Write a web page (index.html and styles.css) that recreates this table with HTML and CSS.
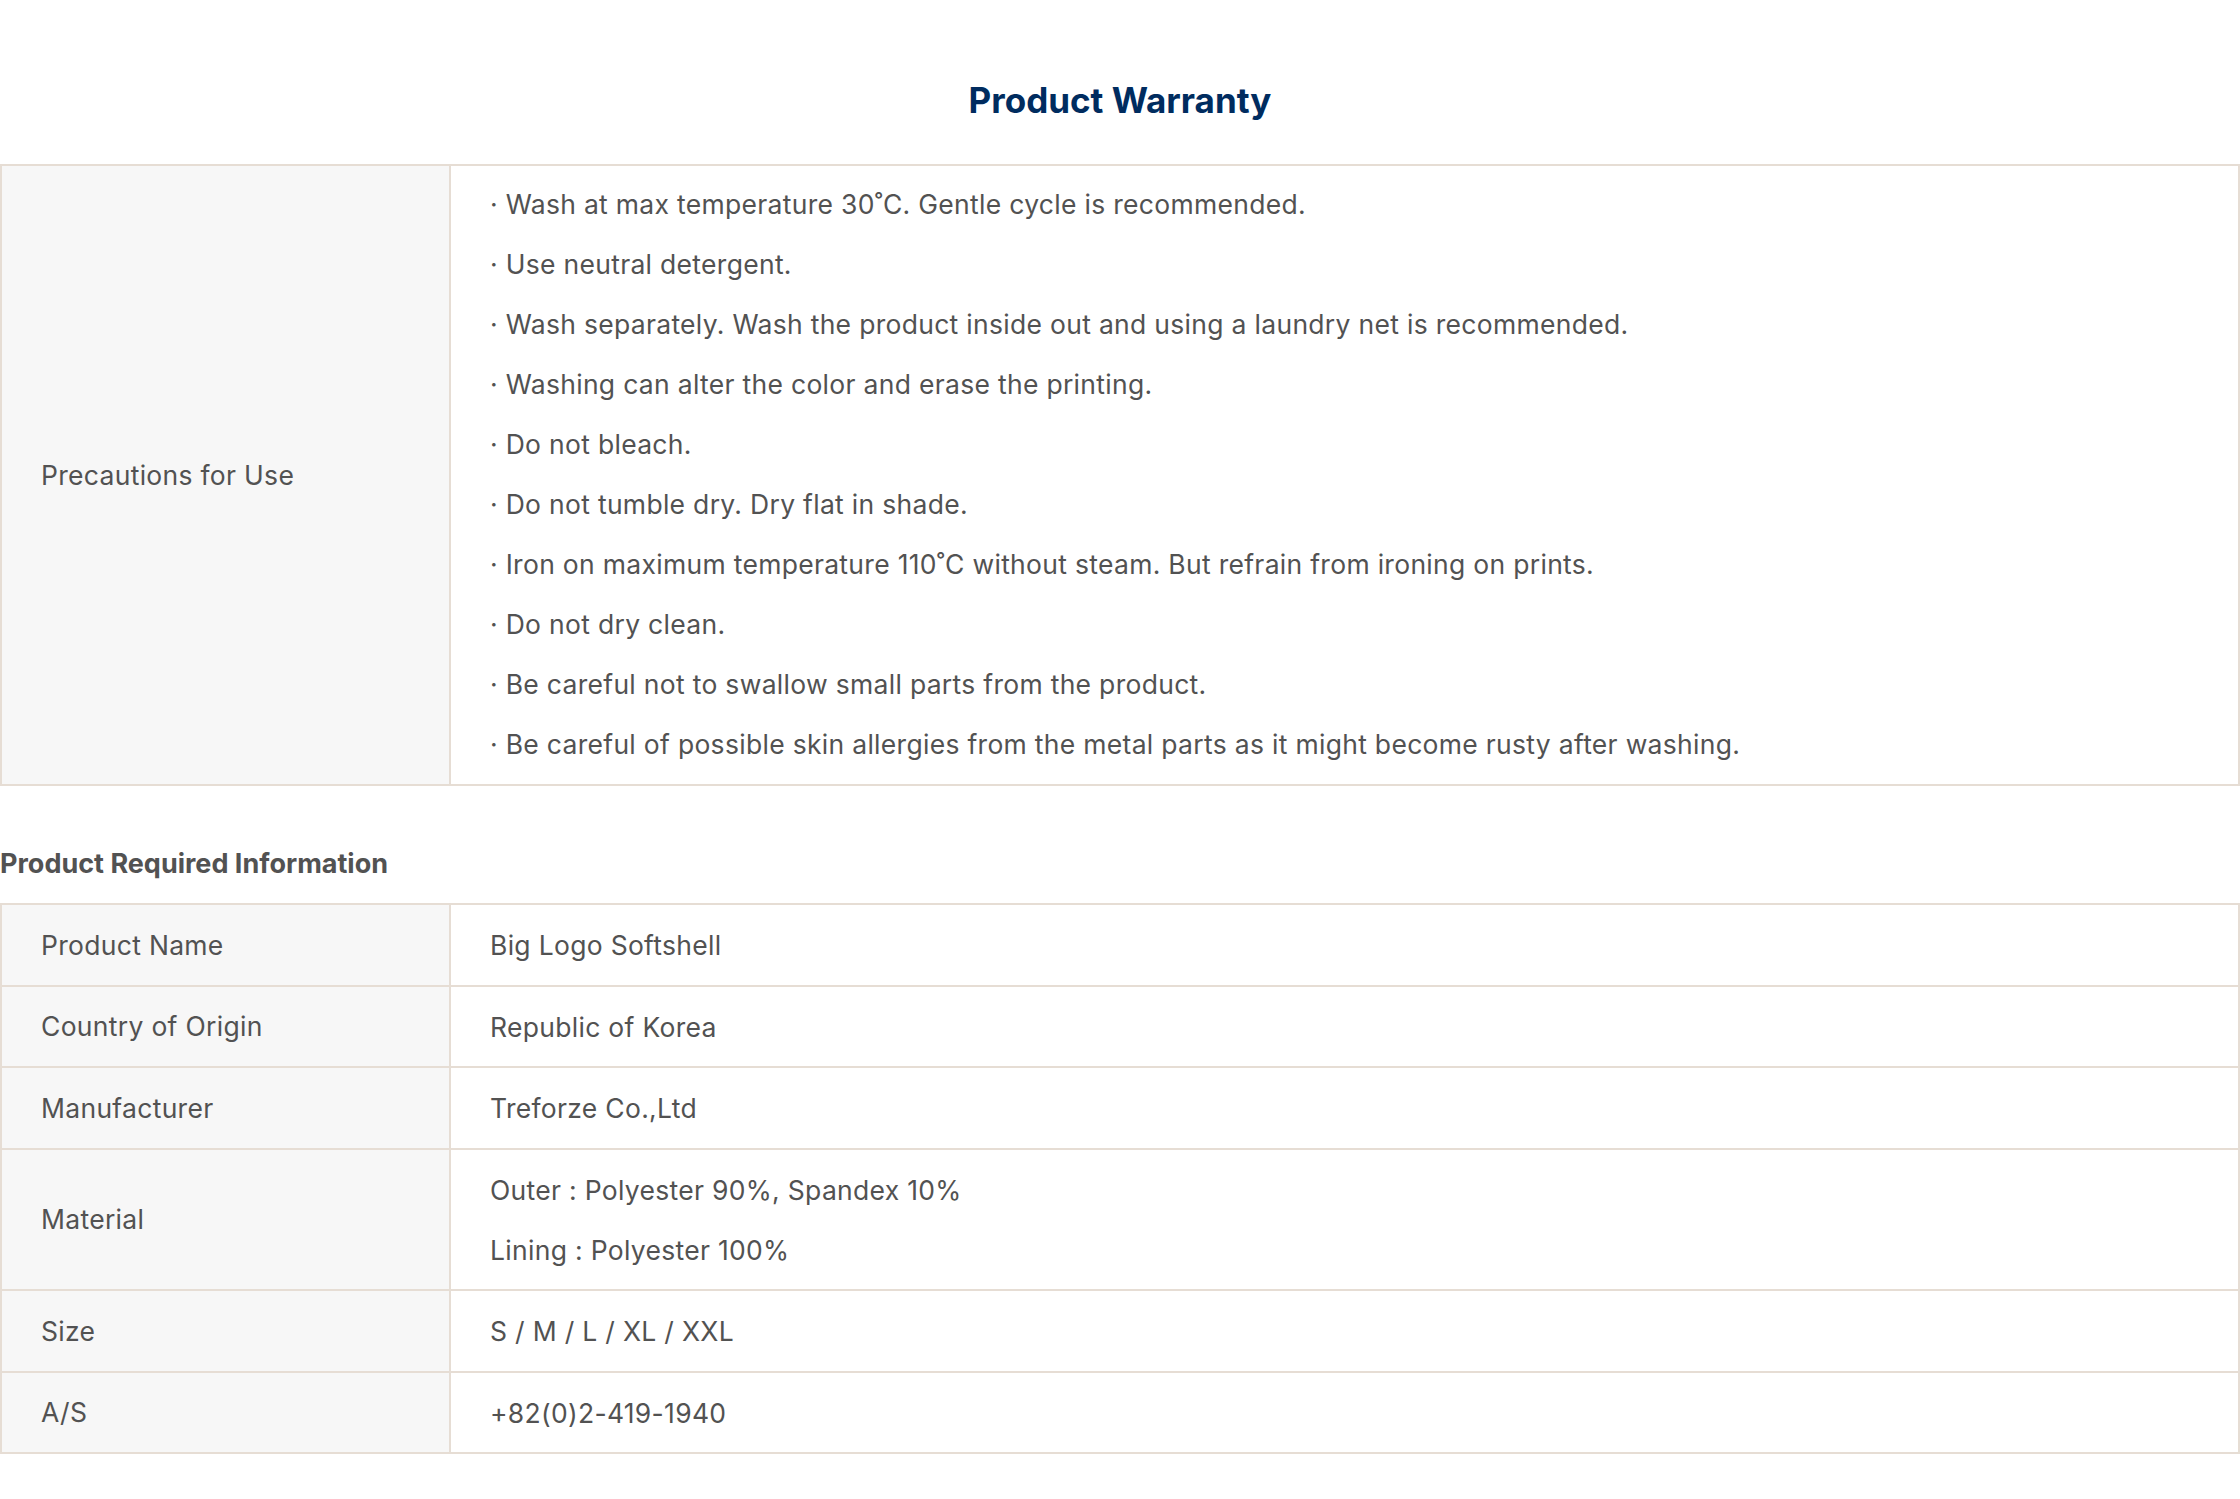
FILE: index.html
```html
<!DOCTYPE html>
<html lang="en">
<head>
<meta charset="utf-8">
<title>Product Warranty</title>
<link rel="stylesheet" href="styles.css">
</head>
<body>
<div class="page">
  <h2 class="title">Product Warranty</h2>

  <div class="spec">
    <div class="row">
      <div class="label">Precautions for Use</div>
      <div class="value list">
        <p>· Wash at max temperature 30˚C. Gentle cycle is recommended.</p>
        <p>· Use neutral detergent.</p>
        <p>· Wash separately. Wash the product inside out and using a laundry net is recommended.</p>
        <p>· Washing can alter the color and erase the printing.</p>
        <p>· Do not bleach.</p>
        <p>· Do not tumble dry. Dry flat in shade.</p>
        <p>· Iron on maximum temperature 110˚C without steam. But refrain from ironing on prints.</p>
        <p>· Do not dry clean.</p>
        <p>· Be careful not to swallow small parts from the product.</p>
        <p>· Be careful of possible skin allergies from the metal parts as it might become rusty after washing.</p>
      </div>
    </div>
  </div>

  <h3 class="subtitle">Product Required Information</h3>

  <div class="spec">
    <div class="row">
      <div class="label">Product Name</div>
      <div class="value"><p>Big Logo Softshell</p></div>
    </div>
    <div class="row">
      <div class="label">Country of Origin</div>
      <div class="value"><p>Republic of Korea</p></div>
    </div>
    <div class="row">
      <div class="label">Manufacturer</div>
      <div class="value"><p>Treforze Co.,Ltd</p></div>
    </div>
    <div class="row">
      <div class="label">Material</div>
      <div class="value"><p>Outer : Polyester 90%, Spandex 10%</p><p>Lining : Polyester 100%</p></div>
    </div>
    <div class="row">
      <div class="label">Size</div>
      <div class="value"><p>S / M / L / XL / XXL</p></div>
    </div>
    <div class="row">
      <div class="label">A/S</div>
      <div class="value"><p>+82(0)2-419-1940</p></div>
    </div>
  </div>
</div>
</body>
</html>
```
FILE: styles.css
```css
* { box-sizing: border-box; }
html, body {
  margin: 0;
  padding: 0;
  background: #ffffff;
}
body {
  font-family: Inter, "Noto Sans", sans-serif;
  color: #525252;
}
.page {
  width: 2240px;
}
.title {
  margin: 0;
  padding-top: 75px;
  height: 164px;
  line-height: 50px;
  text-align: center;
  font-size: 35px;
  font-weight: 700;
  color: #002c5f;
}
.spec {
  border-top: 2px solid #e6ddd4;
  border-left: 2px solid #e6ddd4;
  border-right: 2px solid #e6ddd4;
}
.row {
  display: flex;
  border-bottom: 2px solid #e6ddd4;
}
.label {
  flex: 0 0 449px;
  display: flex;
  align-items: center;
  padding-left: 39px;
  background: #f7f7f7;
  border-right: 2px solid #e6ddd4;
  font-size: 26.5px;
  letter-spacing: 0.3px;
}
.value {
  flex: 1 1 auto;
  padding: 10px 0 9.5px 39px;
  font-size: 26.5px;
  letter-spacing: 0.3px;
}
.value p {
  margin: 0;
  line-height: 60px;
}
.value.list {
  padding: 8px 0 10px 39px;
}
.subtitle {
  margin: 58px 0 19px;
  line-height: 40px;
  font-size: 27px;
  font-weight: 700;
  color: #525252;
}
```
